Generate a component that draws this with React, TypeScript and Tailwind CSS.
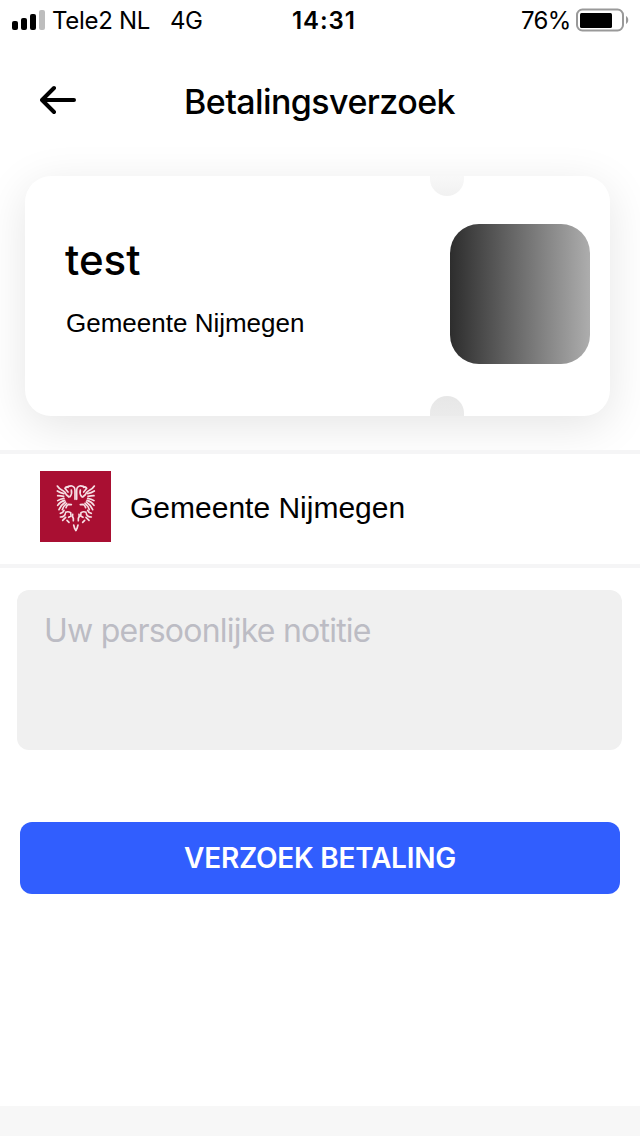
function StatusBar() {
  return (
    <div className="flex h-10 items-center font-[Inter,sans-serif] text-[24px] leading-none">
      <div className="flex w-[292px] items-center pl-3">
        <svg width="34" height="20" viewBox="0 0 34 20" className="shrink-0">
          <rect x="0" y="11" width="6" height="9" rx="2" />
          <rect x="9" y="8" width="6" height="12" rx="2" />
          <rect x="18" y="4" width="6" height="16" rx="2" />
          <rect x="27" y="0" width="6" height="20" rx="2" fill="#bdbdbd" />
        </svg>
        <span className="ml-[6px] w-[118px] pt-[2px] tracking-[-0.3px] whitespace-nowrap">Tele2 NL</span>
        <span className="pt-[2px] tracking-[-0.4px] whitespace-nowrap">4G</span>
      </div>
      <span className="w-[229px] pt-[2px] tracking-[0.9px] whitespace-nowrap font-semibold">14:31</span>
      <span className="w-[55px] pt-[2px] tracking-[-0.7px] whitespace-nowrap">76%</span>
      <svg width="54" height="24" viewBox="0 0 54 24" className="shrink-0">
        <rect x="1" y="1.5" width="46" height="21" rx="5.5" fill="none" stroke="#999" strokeWidth="2" />
        <rect x="4" y="5" width="32" height="15" rx="1.5" />
        <path d="M50 8c3 1.500 3 6.500 0 8z" fill="#999" />
      </svg>
    </div>
  );
}

function Wing() {
  return (
    <>
      <path d="M135 118V92q0-12-9-14-10-1-18 5" />
      <path d="M114 82q-7-3-9 3l9 11" />
      <path d="M124 90q3 12-4 20" />
      <path d="M82 78q5 9 17 14 8 5 10 12l8 7" />
      <path d="M82 93q9 6 20 8" />
      <path d="M83 107q9 0 18 2" />
      <path d="M83 122q8-5 19-7" />
      <path d="M83 136q7-11 21-15" />
      <path d="M87 149q6-14 19-23" />
      <path d="M97 149q4-12 13-19" />
      <path d="M108 143q2-7 8-10l8 1" />
      <path d="M91 160q8-1 11-9" />
      <path d="M107 157q7-4 15 1l1 10-7 4" />
      <path d="M106 161q-3 10-15 10" />
      <path d="M107 172l-9 9M111 181l6 6" />
      <path d="M128 163q-2 7 2 12v7" />
      <path d="M131 195q2 11 7 16" />
    </>
  );
}

function Crest() {
  return (
    <svg width="71" height="71" viewBox="30 33 213 213" className="shrink-0 bg-[#a90f32]">
      <g fill="none" stroke="#f6dfe4" strokeWidth="5" strokeLinecap="round">
        <Wing />
        <g transform="translate(275 0) scale(-1 1)">
          <Wing />
        </g>
      </g>
    </svg>
  );
}

function VoucherCard() {
  return (
    <div className="relative ml-[25px] flex h-[240px] w-[585px] items-start justify-between rounded-[26px] bg-white pr-5 pl-10 shadow-[0_10px_46px_rgba(0,0,0,0.105)]">
      <div className="flex h-full flex-col pt-[59px]">
        <h2 className="font-[Inter,sans-serif] text-[42px] leading-[50px] font-medium">test</h2>
        <p className="mt-[23px] ml-px font-['Liberation_Sans',Arial,sans-serif] text-[26px] leading-[30px]">Gemeente Nijmegen</p>
      </div>
      <div className="mt-12 size-[140px] rounded-[29px] bg-linear-to-r/srgb from-[#2d2d2d] to-[#adadad]" />
      <div className="absolute top-0 left-[405px] h-5 w-[34px] rounded-b-[17px] bg-linear-to-b from-[#f8f8f8] to-[#f1f1f1]" />
      <div className="absolute bottom-0 left-[405px] h-5 w-[34px] rounded-t-[17px] bg-linear-to-b from-[#e7e7e7] to-[#ebebeb]" />
    </div>
  );
}

export default function App() {
  return (
    <div className="flex h-[1136px] w-[640px] flex-col overflow-hidden bg-white text-black">
      <StatusBar />
      <header className="flex h-[136px] items-start pt-[40px]">
        <div className="flex h-10 w-[184px] items-center pl-10">
          <svg width="36" height="30" viewBox="0 0 36 30" fill="none" stroke="black" strokeWidth="4" strokeLinecap="round" strokeLinejoin="round">
            <path d="M34 15H3M14 3L2 15l12 12" />
          </svg>
        </div>
        <h1 className="pt-px font-[Inter,sans-serif] text-[34px] leading-[42px] font-medium tracking-[-0.58px] whitespace-nowrap">Betalingsverzoek</h1>
      </header>
      <VoucherCard />
      <div className="relative mt-[34px] flex h-[118px] items-center border-y-4 border-[#f5f5f6] bg-white pb-[5px] pl-10">
        <Crest />
        <span className="ml-[19px] pt-[2px] font-['Liberation_Sans',Arial,sans-serif] text-[30px] whitespace-nowrap">Gemeente Nijmegen</span>
      </div>
      <div className="mt-[22px] ml-[17px] h-[160px] w-[605px] rounded-xl bg-[#f0f0f0] pt-[21px] pl-[27px] font-[Inter,sans-serif] text-[32px] leading-[40px] tracking-[-0.77px] text-[#bcbcc4]">
        <span className="whitespace-nowrap">Uw persoonlijke notitie</span>
      </div>
      <button className="mt-[72px] ml-5 flex h-[72px] w-[600px] items-center justify-center rounded-xl bg-[#315efe] font-[Inter,sans-serif] text-[28px] font-semibold tracking-[-0.25px] text-white">
        <span className="pb-px whitespace-nowrap">VERZOEK BETALING</span>
      </button>
      <footer className="mt-auto h-[30px] bg-[#f7f7f7]" />
    </div>
  );
}
